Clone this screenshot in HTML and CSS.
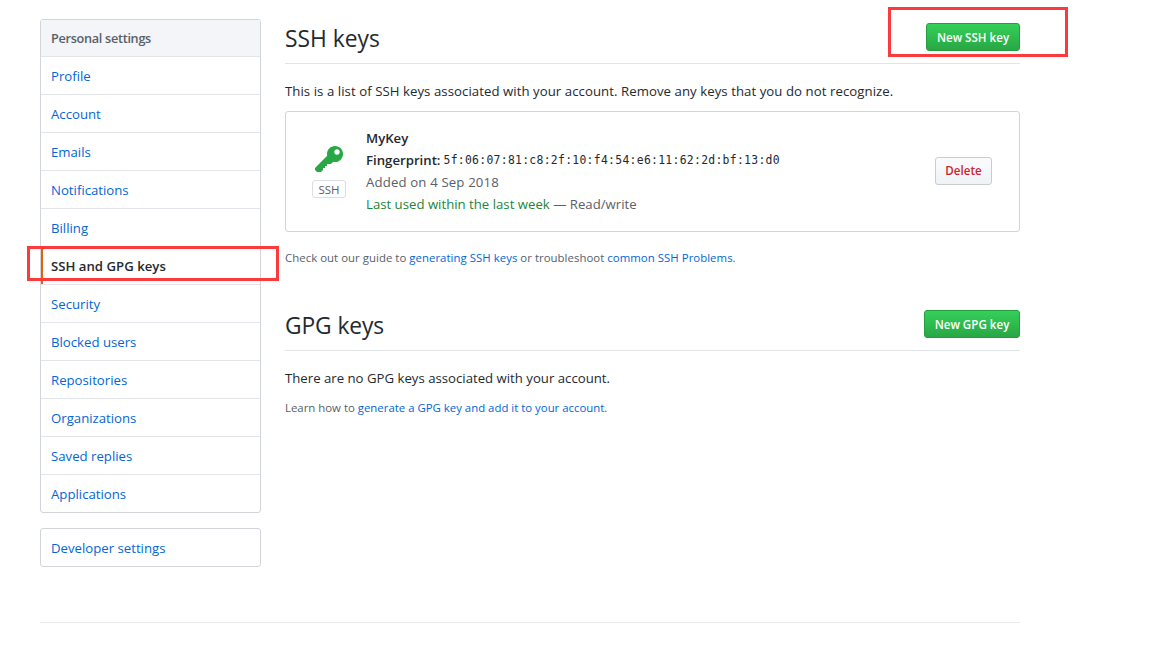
FILE: index.html
```html
<!DOCTYPE html>
<html lang="en">
<head>
<meta charset="utf-8">
<title>SSH and GPG keys</title>
<link rel="stylesheet" href="styles.css">
</head>
<body>
<div class="page">
  <div class="columns">
    <aside class="sidebar">
      <nav class="menu">
        <h3 class="menu-heading">Personal settings</h3>
        <a class="menu-item">Profile</a>
        <a class="menu-item">Account</a>
        <a class="menu-item">Emails</a>
        <a class="menu-item">Notifications</a>
        <a class="menu-item">Billing</a>
        <a class="menu-item selected">SSH and GPG keys</a>
        <a class="menu-item">Security</a>
        <a class="menu-item">Blocked users</a>
        <a class="menu-item">Repositories</a>
        <a class="menu-item">Organizations</a>
        <a class="menu-item">Saved replies</a>
        <a class="menu-item">Applications</a>
      </nav>
      <nav class="menu">
        <a class="menu-item">Developer settings</a>
      </nav>
    </aside>
    <main class="content">
      <div class="subhead">
        <h2 class="title">SSH keys</h2>
        <button class="btn btn-primary btn-ssh">New SSH key</button>
      </div>
      <p class="intro intro-ssh">This is a list of SSH keys associated with your account. Remove any keys that you do not recognize.</p>
      <div class="key-card">
        <div class="key-type">
          <svg class="key-icon" width="28" height="32" viewBox="0 0 14 16"><path fill-rule="evenodd" d="M12.83 2.17C12.08 1.42 11.14 1.03 10 1c-1.13.03-2.08.42-2.83 1.17S6.04 3.86 6.01 5c0 .3.03.59.09.89L0 12v1l1 1h2l1-1v-1h1v-1h1v-1h2l1.09-1.11c.3.08.59.11.91.11 1.14-.03 2.08-.42 2.83-1.17S13.97 6.14 14 5c-.03-1.14-.42-2.08-1.17-2.83zM11 5.38c-.77 0-1.38-.61-1.38-1.38 0-.77.61-1.38 1.38-1.38.77 0 1.38.61 1.38 1.38 0 .77-.61 1.38-1.38 1.38z"/></svg>
          <span class="badge">SSH</span>
        </div>
        <div class="key-info">
          <div class="key-name">MyKey</div>
          <div class="key-print"><span class="print-label">Fingerprint:</span><code>5f:06:07:81:c8:2f:10:f4:54:e6:11:62:2d:bf:13:d0</code></div>
          <div class="key-added">Added on 4 Sep 2018</div>
          <div class="key-used"><span class="recent">Last used within the last week</span> — Read/write</div>
        </div>
        <button class="btn btn-danger">Delete</button>
      </div>
      <p class="note note-ssh">Check out our guide to <a>generating SSH keys</a> or troubleshoot <a>common SSH Problems</a>.</p>
      <div class="subhead subhead-gpg">
        <h2 class="title title-gpg">GPG keys</h2>
        <button class="btn btn-primary btn-gpg">New GPG key</button>
      </div>
      <p class="intro">There are no GPG keys associated with your account.</p>
      <p class="note note-gpg">Learn how to <a>generate a GPG key and add it to your account</a>.</p>
    </main>
  </div>
  <footer class="footer"></footer>
</div>
<div class="mark mark-menu"></div>
<div class="mark mark-button"></div>
</body>
</html>
```
FILE: styles.css
```css
* { box-sizing: border-box; }
body {
  margin: 0;
  height: 655px;
  overflow: hidden;
  background: #fff;
  color: #24292e;
  font-family: "Open Sans", "Noto Sans", sans-serif;
  font-size: 13.2px;
  line-height: 22px;
}
h2, h3, p { margin: 0; }
a { color: #0366d6; text-decoration: none; }
.page { width: 980px; margin: 0 0 0 40px; padding-top: 19px; }
.columns { display: flex; gap: 24px; height: 603px; }
.sidebar { width: 221px; flex: none; }
.menu {
  border: 1px solid #d1d5da;
  border-radius: 3px;
  margin-bottom: 15px;
  overflow: hidden;
}
.menu-heading, .menu-item {
  display: block;
  height: 38px;
  padding: 0 10px;
  line-height: 39px;
  border-bottom: 1px solid #e1e4e8;
}
.menu-heading {
  height: 37px;
  font-size: 12.7px;
  line-height: 37px;
  font-weight: 600;
  letter-spacing: -0.3px;
  color: #586069;
  background: #f3f5f8;
}
.menu-item:last-child { height: 37px; border-bottom: 0; }
.menu-item.selected {
  color: #24292e;
  font-weight: 600;
  box-shadow: inset 2px 0 #e36209;
}
.content { width: 735px; flex: none; }
.subhead {
  display: flex;
  justify-content: space-between;
  align-items: flex-start;
  height: 45px;
  padding-top: 4px;
  border-bottom: 1px solid #e1e4e8;
}
.title { font-size: 22.8px; font-weight: 400; line-height: 32px; }
.title-gpg { letter-spacing: -0.1px; }
.btn {
  height: 28px;
  padding: 0;
  border-radius: 3px;
  font-family: inherit;
  font-size: 11.6px;
  font-weight: 600;
  line-height: 26px;
  text-align: center;
  white-space: nowrap;
}
.btn-primary {
  padding-top: 1px;
  border: 1px solid #269e3f;
  color: #fff;
  background: linear-gradient(#34d058, #28a745);
}
.btn-ssh { width: 94px; }
.btn-gpg { width: 96px; }
.btn-danger {
  width: 57px;
  margin-bottom: 2px;
  border: 1px solid #c9cdd1;
  color: #cb2431;
  background: linear-gradient(#fafbfc, #eff3f6);
}
.intro { height: 22px; margin-top: 16px; white-space: nowrap; }
.intro-ssh { letter-spacing: 0.06px; }
.key-card {
  display: flex;
  align-items: center;
  height: 121px;
  margin-top: 9px;
  padding: 0 27px 0 26px;
  border: 1px solid #d1d5da;
  border-radius: 3px;
}
.key-type { display: flex; flex-direction: column; align-items: center; width: 34px; padding-bottom: 2px; }
.key-icon { fill: #28a745; display: block; }
.badge {
  width: 34px;
  height: 18px;
  margin-top: 4px;
  border: 1px solid #dcdee0;
  border-radius: 3px;
  color: #586069;
  font-size: 11.5px;
  line-height: 17px;
  text-align: center;
}
.key-info { flex: 1; margin-left: 20px; padding-bottom: 2px; white-space: nowrap; }
.key-info div { height: 22px; }
.key-name, .print-label { font-weight: 600; }
.key-print { display: flex; gap: 3px; }
code { font-family: "DejaVu Sans Mono", monospace; font-size: 11.4px; letter-spacing: 0.3px; }
.key-added, .key-used { color: #586069; }
.key-added { letter-spacing: 0.15px; }
.recent { color: #22863a; }
.note { height: 18px; font-size: 11.4px; line-height: 18px; color: #586069; white-space: nowrap; }
.note-ssh { margin-top: 17px; letter-spacing: 0.035px; }
.subhead-gpg { margin-top: 39px; }
.note-gpg { margin-top: 10px; }
.footer { border-top: 1px solid #eaecef; }
.mark { position: absolute; border: 3px solid #fb3b3b; }
.mark-menu { left: 27px; top: 246px; width: 252px; height: 35px; }
.mark-button { left: 888px; top: 7px; width: 180px; height: 50px; }
```
